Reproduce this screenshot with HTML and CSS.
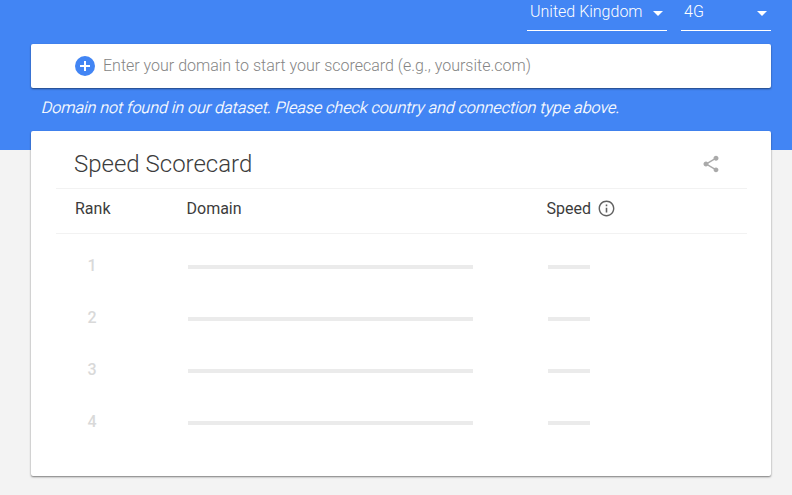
FILE: index.html
```html
<!DOCTYPE html>
<html lang="en">
<head>
<meta charset="utf-8">
<title>Speed Scorecard</title>
<link rel="stylesheet" href="styles.css">
</head>
<body>
<main class="page">
  <div class="filters">
    <div class="select country"><span>United Kingdom</span><i class="arrow"></i></div>
    <div class="select network"><span>4G</span><i class="arrow"></i></div>
  </div>
  <div class="search">
    <svg class="add" viewBox="0 0 20 20"><circle cx="10" cy="10" r="10" fill="#4285f4"/><path d="M10 5v10M5 10h10" stroke="#fff" stroke-width="2"/></svg>
    <span>Enter your domain to start your scorecard (e.g., yoursite.com)</span>
  </div>
  <p class="error">Domain not found in our dataset. Please check country and connection type above.</p>
  <section class="card">
    <header class="card-head">
      <h1>Speed Scorecard</h1>
      <svg class="share" viewBox="0 0 24 24"><path fill="#aaa" d="M18 16.08c-.76 0-1.44.3-1.96.77L8.91 12.7c.05-.23.09-.46.09-.7s-.04-.47-.09-.7l7.05-4.11c.54.5 1.25.81 2.04.81 1.66 0 3-1.34 3-3s-1.34-3-3-3-3 1.34-3 3c0 .24.04.47.09.7L8.04 9.81C7.5 9.31 6.79 9 6 9c-1.66 0-3 1.34-3 3s1.34 3 3 3c.79 0 1.5-.31 2.04-.81l7.12 4.16c-.05.21-.08.43-.08.65 0 1.61 1.31 2.92 2.92 2.92s2.92-1.31 2.92-2.92-1.31-2.92-2.92-2.92z"/></svg>
    </header>
    <div class="row labels">
      <span>Rank</span><span>Domain</span>
      <span class="speed">Speed <svg class="info" viewBox="0 0 24 24"><path fill="#616161" d="M11 17h2v-6h-2v6zm1-15C6.480 2 2 6.480 2 12s4.480 10 10 10 10-4.480 10-10S17.520 2 12 2zm0 18.200c-4.530 0-8.200-3.670-8.200-8.200s3.670-8.200 8.200-8.200 8.200 3.670 8.200 8.200-3.670 8.200-8.200 8.200zM11 9h2V7h-2v2z"/></svg></span>
    </div>
    <div class="rows">
      <div class="row empty"><b>1</b><i class="bar"></i><i class="bar short"></i></div>
      <div class="row empty"><b>2</b><i class="bar"></i><i class="bar short"></i></div>
      <div class="row empty"><b>3</b><i class="bar"></i><i class="bar short"></i></div>
      <div class="row empty"><b>4</b><i class="bar"></i><i class="bar short"></i></div>
    </div>
  </section>
</main>
</body>
</html>
```
FILE: styles.css
```css
* { box-sizing: border-box; }
body { margin: 0; background: #f3f3f3; font: 16px/24px Roboto, sans-serif; color: #3c3c3c; }
.page { height: 495px; padding: 0 21px 0 31px; background: linear-gradient(#4285f4 150px, #f3f3f3 150px); overflow: hidden; }
.filters { display: flex; justify-content: flex-end; gap: 14px; height: 31px; color: #fff; }
.select { display: flex; justify-content: space-between; align-items: center; border-bottom: 1px solid #fff; padding: 0 4px 7px 3px; font-weight: 300; }
.country { width: 140px; }
.network { width: 90px; }
.arrow { border: 5px solid transparent; border-top-color: #fff; border-bottom: 0; margin-top: 4px; }
.search { margin-top: 13px; height: 44px; background: #fff; border-radius: 2px; box-shadow: 0 1px 2px rgba(0,0,0,.5); display: flex; align-items: center; padding-left: 44px; font-weight: 300; color: #858585; }
.add { width: 20px; height: 20px; margin-right: 8px; }
.error { margin: 8px 0 0 11px; color: #fff; width: max-content; font-weight: 300; height: 24px; white-space: nowrap; transform: skewX(-14deg); -webkit-text-stroke: .2px #fff; }
.card { margin-top: 11px; height: 345px; background: #fff; border-radius: 2px; box-shadow: 0 1px 2px rgba(0,0,0,.5); padding: 0 24px 0 25px; }
.card-head { height: 58px; display: flex; justify-content: space-between; align-items: center; padding: 8px 26px 0 18px; border-bottom: 1px solid #f2f2f2; }
h1 { margin: 0; font-size: 24px; font-weight: 300; }
.share { width: 20px; height: 20px; margin-top: 1px; }
.row { display: grid; grid-template-columns: 112px 360px 1fr; align-items: center; padding-left: 19px; }
.labels { height: 45px; border-bottom: 1px solid #f2f2f2; padding-bottom: 5px; }
.labels span + span { margin-left: -.5px; }
.speed { display: flex; align-items: center; gap: 6px; }
.info { width: 19px; height: 19px; }
.rows { padding-top: 6px; }
.empty { height: 52px; }
.empty b { padding-left: 12.5px; font-weight: 500; color: #d9d9d9; }
.bar { width: 285px; height: 4px; margin: 1px 0 0 1px; background: #ebebeb; }
.short { width: 42px; }
```
